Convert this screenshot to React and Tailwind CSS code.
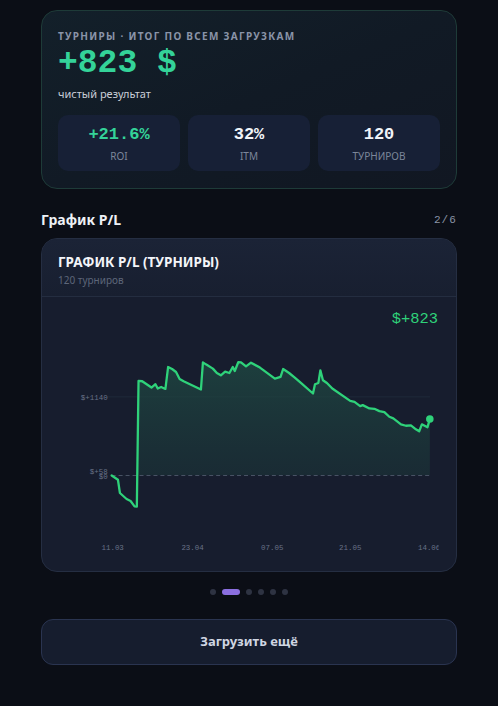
import React from 'react';

const MONO = { fontFamily: '"Liberation Mono", "DejaVu Sans Mono", monospace' };

// P/L curve, in page coordinates (the svg viewBox is offset to match)
const PL = [
  [111, 475.7], [117.3, 480], [119.3, 493.3], [126, 499.3], [130, 501.3], [134, 506.7], [136.3, 507],
  [138, 380.7], [141.7, 381], [151, 387.3], [155, 384], [157.3, 388.3], [160.7, 386.7], [165, 388.7],
  [167.7, 366.7], [171.7, 368.7], [175.7, 371.7], [179.3, 378.7], [183.3, 381], [200.7, 389.3],
  [202.7, 362], [205.7, 364], [212.7, 368.3], [216.7, 372.7], [220.7, 375], [225, 371.3], [229.3, 372.7],
  [232.7, 366.7], [234.7, 370.7], [238.3, 361.7], [241, 362], [246, 366], [251, 362.3], [260, 367.3],
  [275, 378.3], [280.7, 376.7], [283.3, 368.7], [289.3, 372.7], [295, 377.3], [300, 381.7], [313.3, 393.3],
  [315.3, 384], [318.7, 382.7], [320.7, 370], [323.3, 380], [327.3, 382.7], [332.7, 388.3], [350.7, 400.7],
  [355, 401.7], [360.7, 406], [363.3, 405], [370, 408.3], [375, 408.7], [380, 411], [385, 412], [390, 416.7],
  [394, 418.3], [401.7, 424.3], [406.7, 425.7], [411.7, 425.3], [416.7, 429.3], [420, 431.3], [422.7, 424.3],
  [428.3, 427.3], [430.7, 419],
];

const ZERO_Y = 475.7;

function StatBox({ value, label, accent }) {
  return (
    <div className="flex h-[56px] flex-col items-center justify-center rounded-[10px] bg-[#172036]">
      <div className={`text-[17px] font-bold leading-[22px] ${accent ? 'text-[#34d399]' : 'text-[#f1f4f9]'}`} style={MONO}>
        {value}
      </div>
      <div className="mt-[3px] text-[10px] leading-[14px] text-[#7c869a]">{label}</div>
    </div>
  );
}

function PLChart() {
  const line = PL.map(([x, y]) => `${x},${y}`).join(' ');
  const area = `111,${ZERO_Y} ${line} 430.7,${ZERO_Y}`;
  const xTicks = [['11.03', 112], ['23.04', 192.3], ['07.05', 272.3], ['21.05', 350.7], ['14.06', 430]];

  return (
    <svg viewBox="41 297 416 274" className="block h-[274px] w-full">
      <defs>
        <linearGradient id="plFill" x1="0" y1="0" x2="0" y2="1">
          <stop offset="0%" stopColor="#1f4a43" stopOpacity="0.75" />
          <stop offset="100%" stopColor="#1c3a3a" stopOpacity="0.35" />
        </linearGradient>
        <clipPath id="aboveZero">
          <rect x="100" y="300" width="340" height={ZERO_Y - 300} />
        </clipPath>
        <clipPath id="axisClip">
          <rect x="41" y="297" width="398.5" height="274" />
        </clipPath>
      </defs>

      <line x1="106" y1="396.7" x2="431" y2="396.7" stroke="#1f293a" strokeWidth="1" />
      <polygon points={area} fill="url(#plFill)" clipPath="url(#aboveZero)" />
      <line x1="111" y1={ZERO_Y} x2="431" y2={ZERO_Y} stroke="#4a5466" strokeWidth="1" strokeDasharray="4 3" />
      <polyline points={line} fill="none" stroke="#2fd27a" strokeWidth="2.3" strokeLinejoin="round" strokeLinecap="round" />
      <circle cx="430.7" cy="419" r="3.8" fill="#2fd27a" />

      <g style={MONO} fontSize="7.5" fill="#687186" textAnchor="end">
        <text x="107" y="399.5">$+1140</text>
        <text x="107" y="474.5">$+58</text>
        <text x="107" y="479.5">$0</text>
      </g>
      <g style={MONO} fontSize="7.5" fill="#687186" textAnchor="middle" clipPath="url(#axisClip)">
        {xTicks.map(([t, x]) => (
          <text key={t} x={x} y="551">{t}</text>
        ))}
      </g>
      <text x="439" y="322" textAnchor="end" fontSize="15.5" fill="#2fd27a" style={MONO}>$+823</text>
    </svg>
  );
}

export default function App() {
  return (
    <div className="min-h-[706px] bg-[#0b0e16] px-[41px] pt-[10px] pb-10" style={{ fontFamily: '"Noto Sans", "Open Sans", sans-serif' }}>
      {/* итог по турнирам */}
      <div className="rounded-2xl border border-[#1e3b38] bg-gradient-to-br from-[#13202a] via-[#111a25] to-[#111722] px-4 pt-[18px] pb-[17px]">
        <div className="text-[10px] font-bold uppercase leading-[14px] tracking-[0.13em] text-[#8a94a8]">
          Турниры · итог по всем загрузкам
        </div>
        <div className="mt-[3px] text-[33px] font-bold leading-[36px] text-[#34d399]" style={MONO}>+823 $</div>
        <div className="mt-[4px] text-[11px] leading-[16px] text-[#c9ced8]">чистый результат</div>
        <div className="mt-[13px] grid grid-cols-3 gap-2">
          <StatBox value="+21.6%" label="ROI" accent />
          <StatBox value="32%" label="ITM" />
          <StatBox value="120" label="ТУРНИРОВ" />
        </div>
      </div>

      <div className="mt-[21px] flex items-center justify-between">
        <div className="text-[14px] font-bold leading-[20px] text-[#eef1f6]">График P/L</div>
        <div className="text-[11px] leading-[16px] tracking-[0.1em] text-[#8a93a5]" style={MONO}>2/6</div>
      </div>

      {/* график */}
      <div className="mt-2 overflow-hidden rounded-2xl border border-[#252e42] bg-[#171d2e]">
        <div className="h-[58px] border-b border-[#242d40] bg-gradient-to-b from-[#1b2336] to-[#181f30] px-4 pt-[14px]">
          <div className="text-[13.5px] font-bold leading-[18px] text-[#f3f5f9]">ГРАФИК P/L (ТУРНИРЫ)</div>
          <div className="mt-[2px] text-[10px] leading-[14px] text-[#5d6679]">120 турниров</div>
        </div>
        <PLChart />
      </div>

      <div className="mt-[17px] flex items-center justify-center gap-[6px]">
        <span className="h-[6px] w-[6px] rounded-full bg-[#2e3342]" />
        <span className="h-[6px] w-[18px] rounded-full bg-[#8b6fe0]" />
        <span className="h-[6px] w-[6px] rounded-full bg-[#2e3342]" />
        <span className="h-[6px] w-[6px] rounded-full bg-[#2e3342]" />
        <span className="h-[6px] w-[6px] rounded-full bg-[#2e3342]" />
        <span className="h-[6px] w-[6px] rounded-full bg-[#2e3342]" />
      </div>

      <button className="mt-6 flex h-[46px] w-full items-center justify-center rounded-xl border border-[#2a3450] bg-[#161d2e] text-[13px] font-bold text-[#d0d6e2]">
        Загрузить ещё
      </button>
    </div>
  );
}
